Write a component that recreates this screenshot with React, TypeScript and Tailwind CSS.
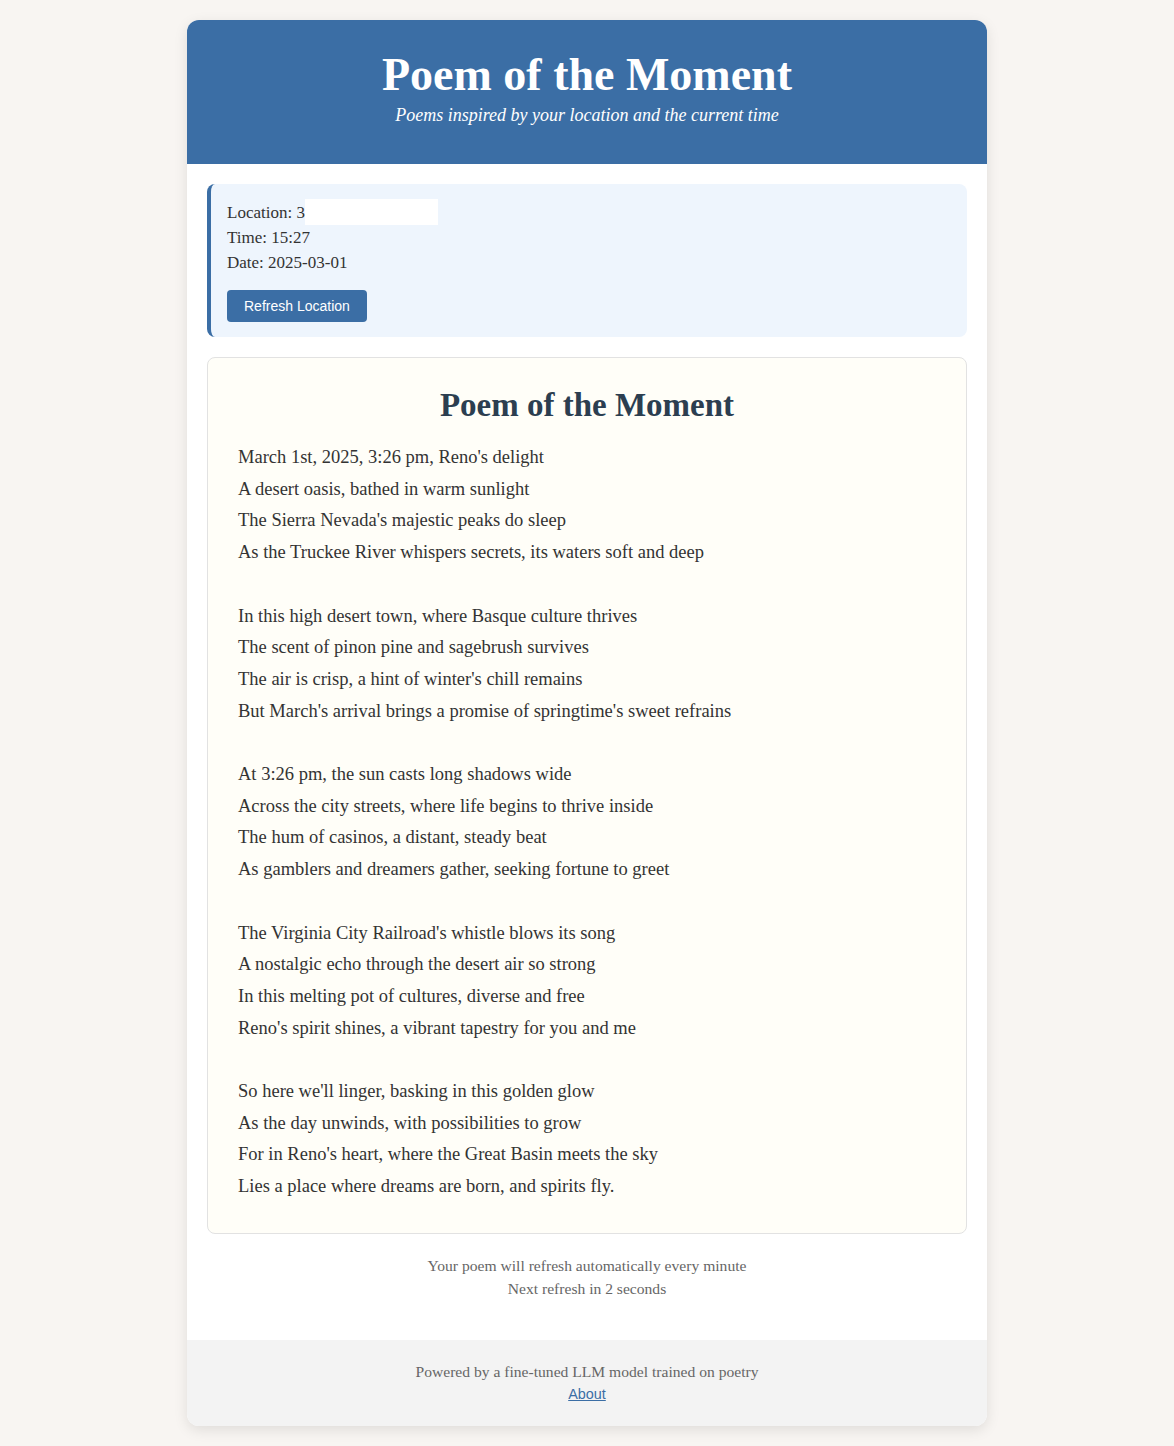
import React from "react";

const stanzas = [
  [
    "March 1st, 2025, 3:26 pm, Reno's delight",
    "A desert oasis, bathed in warm sunlight",
    "The Sierra Nevada's majestic peaks do sleep",
    "As the Truckee River whispers secrets, its waters soft and deep",
  ],
  [
    "In this high desert town, where Basque culture thrives",
    "The scent of pinon pine and sagebrush survives",
    "The air is crisp, a hint of winter's chill remains",
    "But March's arrival brings a promise of springtime's sweet refrains",
  ],
  [
    "At 3:26 pm, the sun casts long shadows wide",
    "Across the city streets, where life begins to thrive inside",
    "The hum of casinos, a distant, steady beat",
    "As gamblers and dreamers gather, seeking fortune to greet",
  ],
  [
    "The Virginia City Railroad's whistle blows its song",
    "A nostalgic echo through the desert air so strong",
    "In this melting pot of cultures, diverse and free",
    "Reno's spirit shines, a vibrant tapestry for you and me",
  ],
  [
    "So here we'll linger, basking in this golden glow",
    "As the day unwinds, with possibilities to grow",
    "For in Reno's heart, where the Great Basin meets the sky",
    "Lies a place where dreams are born, and spirits fly.",
  ],
];

export default function App() {
  return (
    <div className="min-h-screen bg-[#f8f5f2] py-5 font-['Liberation_Serif',serif] text-[#333]">
      <div className="mx-auto w-[800px] overflow-hidden rounded-xl bg-white shadow-[0_4px_14px_rgba(0,0,0,0.1)]">
        {/* header */}
        <header className="flex h-[144px] flex-col items-center bg-[#3b6ea5] pt-[31px] text-white">
          <h1 className="text-[46px] font-bold leading-[48px]">Poem of the Moment</h1>
          <p className="mt-1 text-[18px] italic leading-6">
            Poems inspired by your location and the current time
          </p>
        </header>

        <main className="p-5">
          {/* info box */}
          <div className="rounded-lg border-l-4 border-[#3b6ea5] bg-[#eef5fd] px-4 py-[15px] text-[17px] leading-[25px]">
            <div className="flex items-center">
              Location: 3
              <span className="inline-block h-[26px] w-[133px] bg-white" />
            </div>
            <div>Time: 15:27</div>
            <div>Date: 2025-03-01</div>
            <button className="mt-[15px] h-8 rounded bg-[#3b6ea5] px-[17px] font-['Liberation_Sans',sans-serif] text-[14px] text-white">
              Refresh Location
            </button>
          </div>

          {/* poem card */}
          <div className="mt-5 rounded-lg border border-[#e2e2e2] bg-[#fffef8] p-[30px]">
            <h2 className="text-center text-[33px] font-bold leading-[34px] text-[#2c3e50]">
              Poem of the Moment
            </h2>
            <div className="mt-5 text-[18.5px] leading-[31.7px]">
              {stanzas.map((s, i) => (
                <div key={i} className={i > 0 ? "mt-[31.7px]" : ""}>
                  {s.map(l => (
                    <div key={l}>{l}</div>
                  ))}
                </div>
              ))}
            </div>
          </div>

          {/* refresh note */}
          <div className="mb-5 mt-5 text-center text-[15.6px] leading-[23px] text-[#666]">
            <p>Your poem will refresh automatically every minute</p>
            <p>Next refresh in 2 seconds</p>
          </div>
        </main>

        {/* footer */}
        <footer className="bg-[#f3f3f3] py-[21px] text-center text-[15.6px] leading-[22px] text-[#666]">
          <p>Powered by a fine-tuned LLM model trained on poetry</p>
          <a href="#" className="font-['Liberation_Sans',sans-serif] text-[14.4px] text-[#3b6ea5] underline">
            About
          </a>
        </footer>
      </div>
    </div>
  );
}
